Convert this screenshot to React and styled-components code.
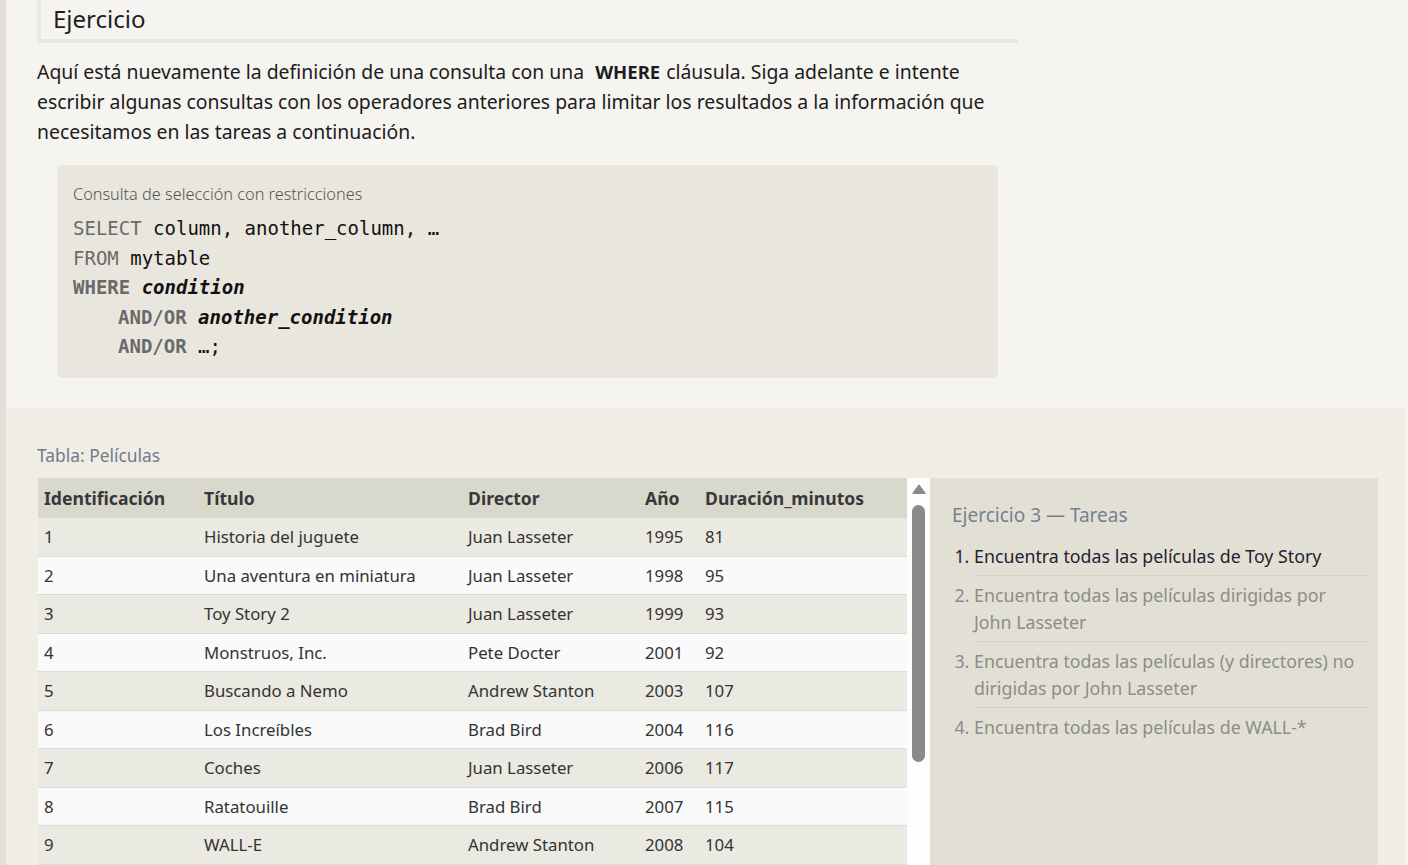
import styled, { createGlobalStyle } from 'styled-components';

const GlobalStyle = createGlobalStyle`
  html, body {
    margin: 0;
    padding: 0;
    background: #f5f4f0;
  }
  body {
    font-family: 'Noto Sans', 'Open Sans', sans-serif;
    color: #222;
  }
  * {
    box-sizing: border-box;
  }
`;

const movies = [
  [1, 'Historia del juguete', 'Juan Lasseter', 1995, 81],
  [2, 'Una aventura en miniatura', 'Juan Lasseter', 1998, 95],
  [3, 'Toy Story 2', 'Juan Lasseter', 1999, 93],
  [4, 'Monstruos, Inc.', 'Pete Docter', 2001, 92],
  [5, 'Buscando a Nemo', 'Andrew Stanton', 2003, 107],
  [6, 'Los Increíbles', 'Brad Bird', 2004, 116],
  [7, 'Coches', 'Juan Lasseter', 2006, 117],
  [8, 'Ratatouille', 'Brad Bird', 2007, 115],
  [9, 'WALL-E', 'Andrew Stanton', 2008, 104],
  [10, 'Arriba', 'Pete Docter', 2009, 101],
  [11, 'Toy Story 3', 'Lee Unkrich', 2010, 103],
  [12, 'Coches 2', 'Juan Lasseter', 2011, 120],
];

const tasks = [
  'Encuentra todas las películas de Toy Story',
  'Encuentra todas las películas dirigidas por John Lasseter',
  'Encuentra todas las películas (y directores) no dirigidas por John Lasseter',
  'Encuentra todas las películas de WALL-*',
];

export default function App() {
  return (
    <>
      <GlobalStyle />
      <Page>
        <Intro>
          <Heading>Ejercicio</Heading>
          <Lead>
            Aquí está nuevamente la definición de una consulta con una <Kw>WHERE</Kw> cláusula. Siga
            adelante e intente escribir algunas consultas con los operadores anteriores para limitar
            los resultados a la información que necesitamos en las tareas a continuación.
          </Lead>
          <CodeBox>
            <CodeTitle>Consulta de selección con restricciones</CodeTitle>
            <Code>
              <Line><Key>SELECT</Key> <Ident>column, another_column, …</Ident></Line>
              <Line><Key>FROM</Key> <Ident>mytable</Ident></Line>
              <Line><Key $bold>WHERE</Key> <Cond>condition</Cond></Line>
              <Line $indent><Key $bold>AND/OR</Key> <Cond>another_condition</Cond></Line>
              <Line $indent><Key $bold>AND/OR</Key> <Ident>…;</Ident></Line>
            </Code>
          </CodeBox>
        </Intro>

        <Exercise>
          <TableCaption>Tabla: Películas</TableCaption>
          <Workspace>
            <TableFrame>
              <Table>
                <colgroup>
                  <col style={{ width: 160 }} />
                  <col style={{ width: 264 }} />
                  <col style={{ width: 177 }} />
                  <col style={{ width: 60 }} />
                  <col />
                </colgroup>
                <thead>
                  <tr>
                    <Th>Identificación</Th>
                    <Th>Título</Th>
                    <Th>Director</Th>
                    <Th>Año</Th>
                    <Th>Duración_minutos</Th>
                  </tr>
                </thead>
                <tbody>
                  {movies.map((m) => (
                    <Tr key={m[0]}>
                      {m.map((v, i) => (
                        <Td key={i}>{v}</Td>
                      ))}
                    </Tr>
                  ))}
                </tbody>
              </Table>
            </TableFrame>
            <ScrollTrack>
              <ScrollArrow viewBox="0 0 14 10">
                <path d="M7 0.8 L13.4 9.5 L0.6 9.5 Z" fill="#8a8a8a" stroke="#8a8a8a" strokeLinejoin="round" />
              </ScrollArrow>
              <ScrollThumb />
            </ScrollTrack>
            <TaskPanel>
              <TaskTitle>Ejercicio 3 — Tareas</TaskTitle>
              <TaskList>
                {tasks.map((t, i) => (
                  <Task key={i} $active={i === 0}>
                    {t}
                  </Task>
                ))}
              </TaskList>
            </TaskPanel>
          </Workspace>
        </Exercise>
      </Page>
    </>
  );
}

const Page = styled.div`
  border-left: 6px solid #e2deda;
  min-height: 865px;
`;

const Intro = styled.section`
  padding: 0 0 30px 31px;
`;

const Heading = styled.h2`
  width: 981px;
  margin: 0;
  padding-left: 12px;
  border-left: 4px solid #e8e8dc;
  border-bottom: 4px solid #e8e8dc;
  font-size: 24px;
  font-weight: 400;
  line-height: 38px;
  padding-bottom: 1px;
  color: #1e1e1e;
`;

const Lead = styled.p`
  width: 981px;
  margin: 14px 0 0;
  font-size: 19.4px;
  line-height: 30px;
  color: #1c1c1c;
`;

const Kw = styled.strong`
  padding: 0 1px 0 6px;
  font-size: 18.5px;
  font-weight: 700;
`;

const CodeBox = styled.div`
  width: 941px;
  margin: 18px 0 0 20px;
  padding: 18px 16px 16px;
  background: #e9e6de;
  border-radius: 5px;
`;

const CodeTitle = styled.div`
  font-size: 16.3px;
  line-height: 22px;
  font-weight: 300;
  color: #555;
`;

const Code = styled.div`
  margin-top: 9px;
  font-family: 'DejaVu Sans Mono', 'Liberation Mono', monospace;
  font-size: 19px;
  line-height: 29.5px;
`;

const Line = styled.div`
  white-space: pre;
  padding-left: ${(p) => (p.$indent ? '45px' : '0')};
`;

const Key = styled.span`
  color: #6a6a6a;
  font-weight: ${(p) => (p.$bold ? 700 : 400)};
`;

const Ident = styled.span`
  color: #111;
`;

const Cond = styled.span`
  color: #111;
  font-style: italic;
  font-weight: 700;
`;

const Exercise = styled.section`
  background: #f0ede5;
  margin-right: 3px;
  border-top-right-radius: 4px;
  padding: 35px 0 0 32px;
`;

const TableCaption = styled.div`
  margin-left: -1px;
  font-size: 17.4px;
  line-height: 24px;
  color: #6f7c8a;
`;

const Workspace = styled.div`
  display: flex;
  margin-top: 11px;
  height: 420px;
  overflow: hidden;
`;

const TableFrame = styled.div`
  width: 869px;
  overflow: hidden;
`;

const Table = styled.table`
  width: 869px;
  border-collapse: collapse;
  table-layout: fixed;
  font-size: 16.8px;
  color: #333;
`;

const Th = styled.th`
  height: 40px;
  padding: 0 6px;
  text-align: left;
  font-size: 17.6px;
  font-weight: 700;
  background: #d9d8cc;
  color: #383838;
  white-space: nowrap;
`;

const Tr = styled.tr`
  background: #eae9e2;
  &:nth-child(even) {
    background: #fafafa;
  }
`;

const Td = styled.td`
  height: 38.5px;
  padding: 0 6px;
  border-bottom: 1px solid #dcdbd5;
  white-space: nowrap;
`;

const ScrollTrack = styled.div`
  width: 23px;
  background: #fdfdfd;
  display: flex;
  flex-direction: column;
  align-items: center;
  padding-top: 6px;
`;

const ScrollArrow = styled.svg`
  width: 14px;
  height: 10px;
`;

const ScrollThumb = styled.div`
  margin-top: 11px;
  width: 13px;
  height: 257px;
  border-radius: 7px;
  background: #8a8a8a;
`;

const TaskPanel = styled.div`
  width: 448px;
  background: #e2e0d4;
  padding: 24px 10px 0 22px;
`;

const TaskTitle = styled.div`
  font-size: 19px;
  line-height: 26px;
  color: #75808f;
`;

const TaskList = styled.ol`
  margin: 9px 0 0;
  padding-left: 22px;
`;

const Task = styled.li`
  padding: 6px 8px 5px 0;
  font-size: 17.8px;
  line-height: 27px;
  color: ${(p) => (p.$active ? '#1f2330' : '#8c8c8c')};
  border-bottom: 1px solid #d3d1c5;
  &:last-child {
    border-bottom: none;
  }
`;
